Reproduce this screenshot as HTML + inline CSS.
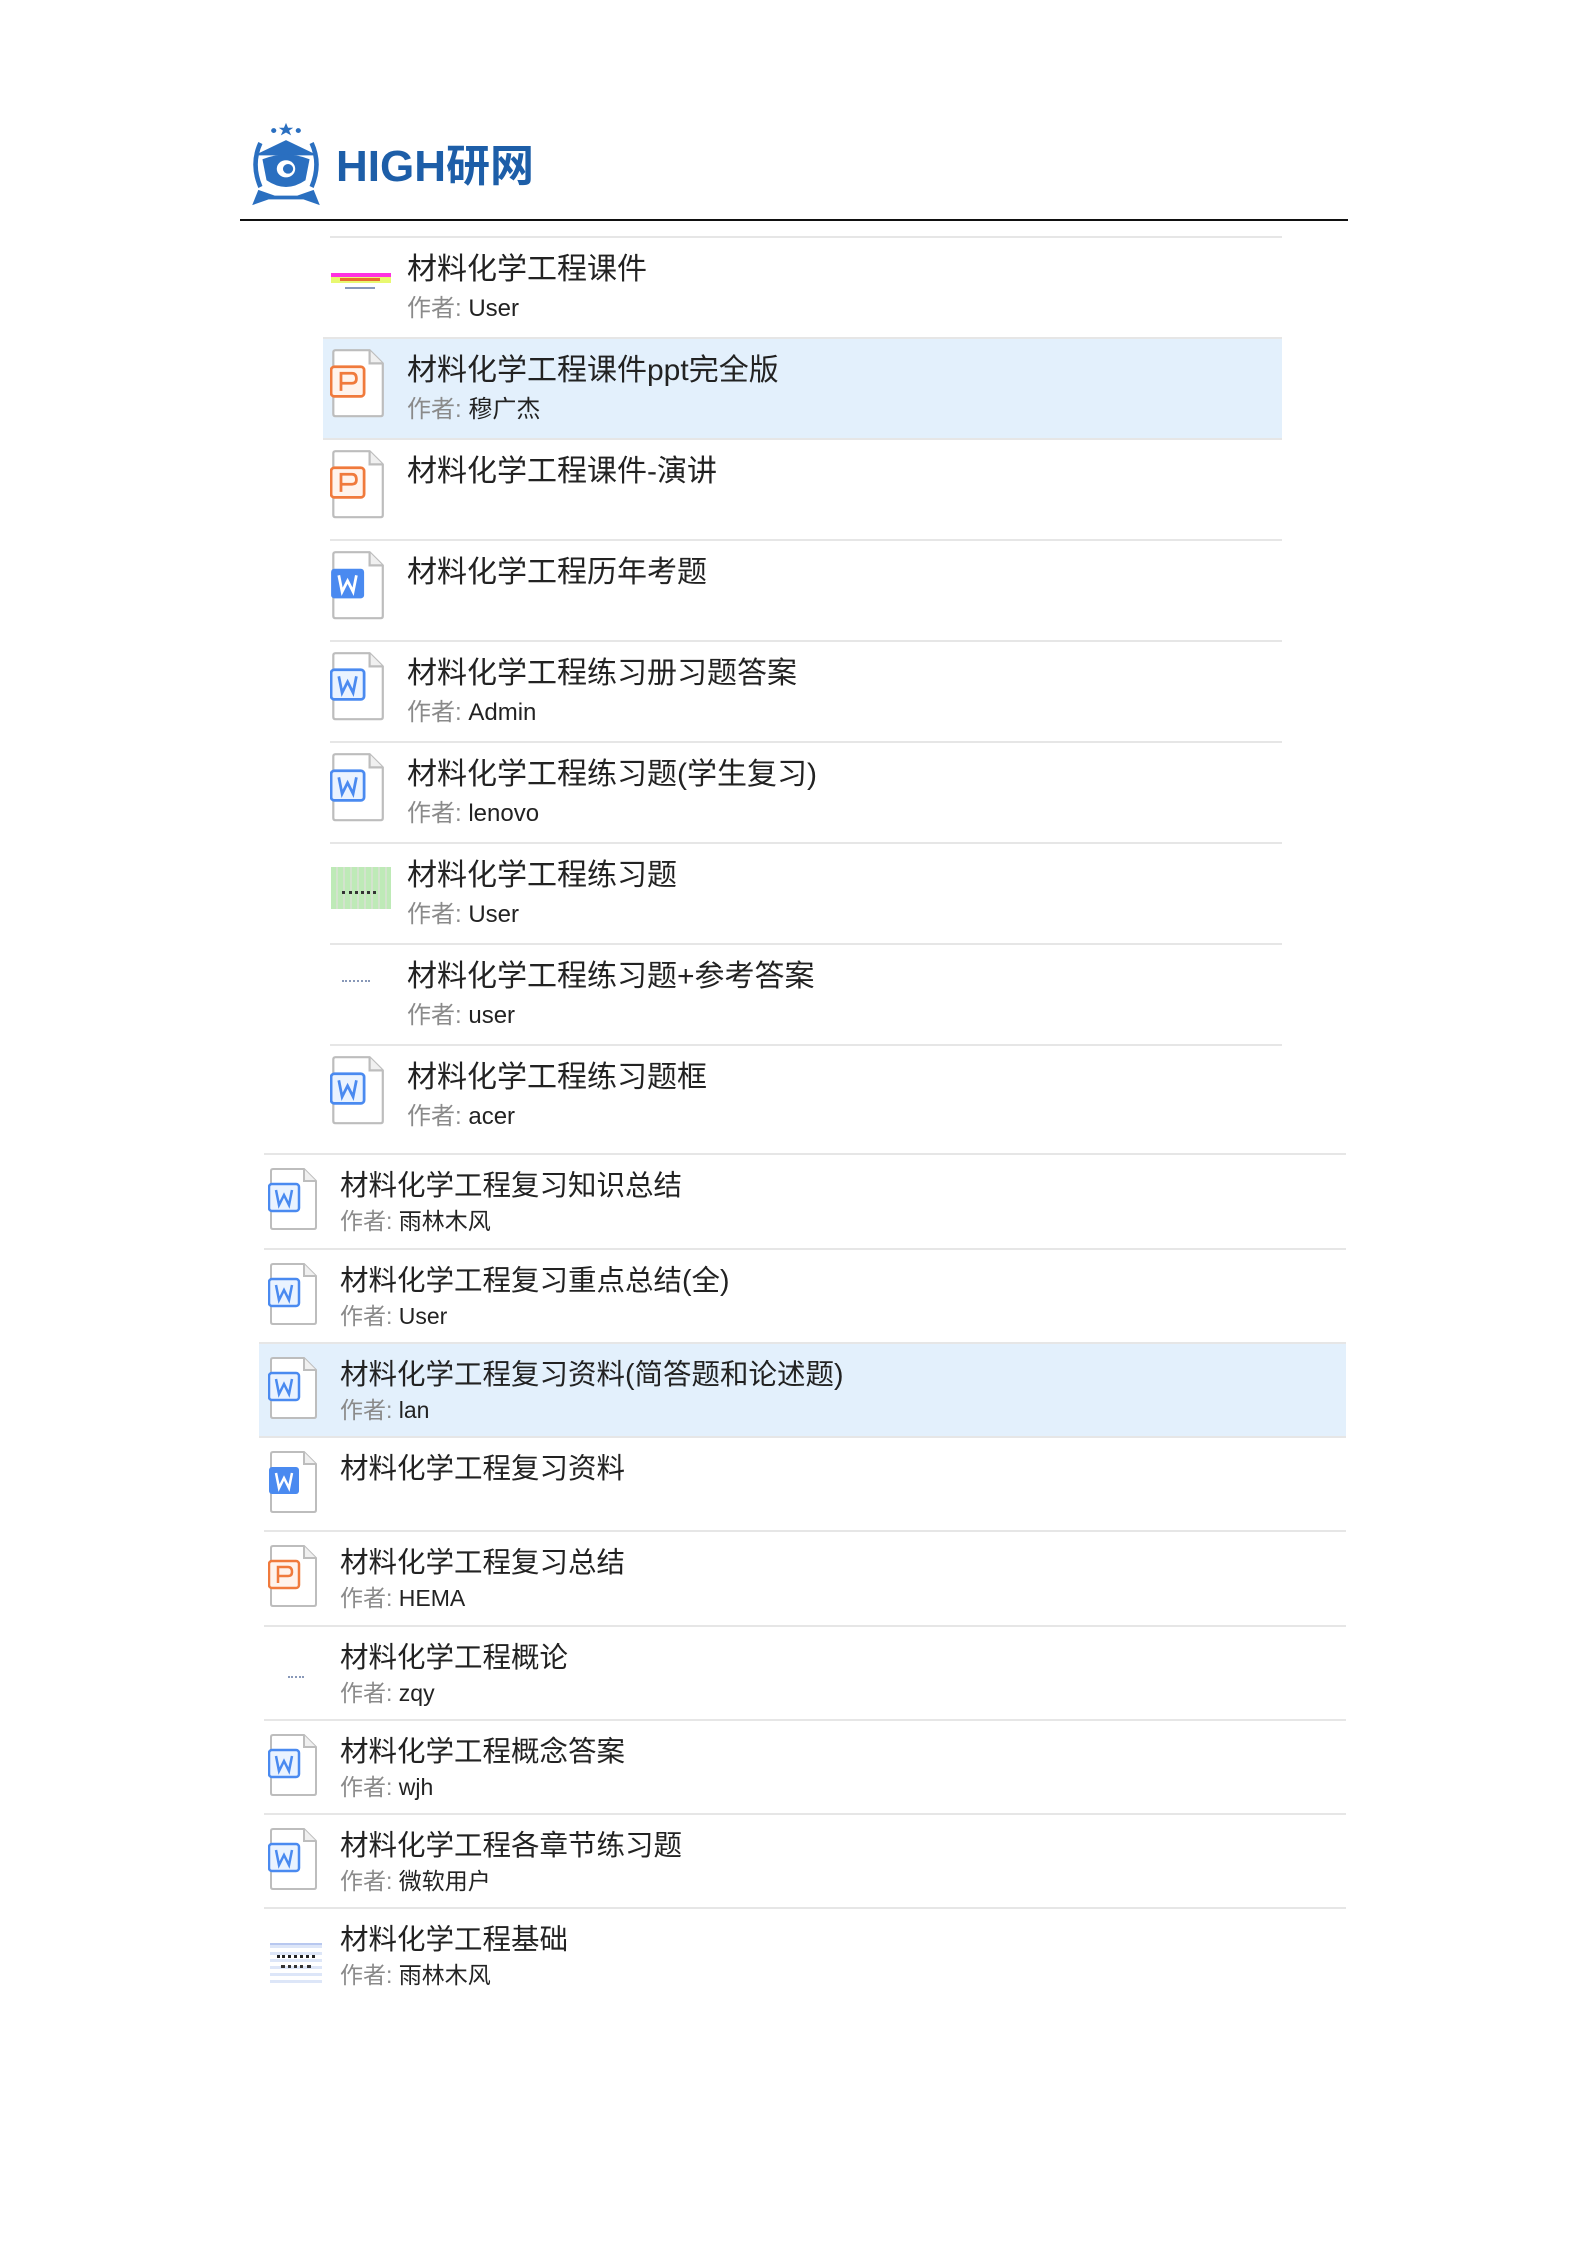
<!DOCTYPE html>
<html><head><meta charset="utf-8">
<style>
html,body{margin:0;padding:0;background:#fff;}
body{width:1587px;height:2245px;position:relative;overflow:hidden;font-family:"Liberation Sans","Microsoft YaHei","Noto Sans CJK SC",sans-serif;}
.a{position:absolute;}
.line{position:absolute;height:2px;background:#e6e6e6;}
.hl{position:absolute;background:#e3f0fc;}
.t1{position:absolute;font-size:30px;color:#222;white-space:nowrap;line-height:1;}
.a1{position:absolute;font-size:24px;color:#222;white-space:nowrap;line-height:1;}
.a1 span,.a2 span{color:#8a8a8a;}
.t2{position:absolute;font-size:28.5px;color:#222;white-space:nowrap;line-height:1;}
.a2{position:absolute;font-size:23px;color:#222;white-space:nowrap;line-height:1;}
</style></head><body>

<svg class="a" style="left:244px;top:121px" width="84" height="88" viewBox="0 0 82 92" preserveAspectRatio="none">
 <g fill="#2a6fc0">
  <polygon points="41,2 43,7 48,7 44,10 46,15 41,12 36,15 38,10 34,7 39,7"/>
  <circle cx="29" cy="10" r="2.5"/><circle cx="53" cy="10" r="2.5"/>
  <path d="M14 22 Q4 45 14 70 L18 68 Q9 45 18 24Z"/>
  <path d="M68 22 Q78 45 68 70 L64 68 Q73 45 64 24Z"/>
  <polygon points="41,20 72,36 10,36"/>
  <path d="M18 40 Q41 30 64 40 L60 62 Q41 76 22 62Z"/>
  <path d="M14 72 L30 78 L52 78 L68 72 L74 88 L58 82 L24 82 L8 88Z"/>
 </g>
 <circle cx="41" cy="50" r="9" fill="#fff"/>
 <circle cx="43" cy="50" r="5" fill="#2a6fc0"/>
</svg>
<div class="a" style="left:336px;top:145px;font-size:44px;font-weight:bold;color:#1d5ea8;line-height:1;font-family:'Liberation Sans','Noto Sans CJK SC',sans-serif;">HIGH研网</div>
<div class="a" style="left:240px;top:219px;width:1108px;height:2px;background:#111"></div>

<svg width="0" height="0" style="position:absolute">
 <defs>
  <g id="doc">
   <path d="M3 1 H34 L46 13 V59 Q46 61 44 61 H3 Q1 61 1 59 V3 Q1 1 3 1Z" fill="#fff" stroke="#bdbdbd" stroke-width="2"/>
   <path d="M34 1 V13 H46" fill="#f0f0f0" stroke="#bdbdbd" stroke-width="2"/>
  </g>
  <g id="w">
   <use href="#doc"/>
   <rect x="-1" y="16" width="30" height="27" rx="3" fill="#eaf3ff" stroke="#4a8af0" stroke-width="2.5"/>
   <path d="M6 22 L9 37 L14 27 L19 37 L22 22" fill="none" stroke="#4a8af0" stroke-width="2.5"/>
  </g>
  <g id="wf">
   <use href="#doc"/>
   <rect x="-1" y="16" width="30" height="27" rx="3" fill="#4a8af0"/>
   <path d="M6 22 L9 37 L14 27 L19 37 L22 22" fill="none" stroke="#fff" stroke-width="2.5"/>
  </g>
  <g id="p">
   <use href="#doc"/>
   <rect x="-1" y="16" width="30" height="27" rx="3" fill="#fff3ec" stroke="#f07a3c" stroke-width="2.5"/>
   <path d="M8 38 V22 H18 Q22 22 22 27 Q22 31 18 31 H8" fill="none" stroke="#f07a3c" stroke-width="2.5"/>
  </g>
 </defs>
</svg>

<div class="hl" style="left:323px;top:338px;width:959px;height:101px"></div>
<div class="line" style="left:330px;top:236px;width:952px"></div>
<div class="line" style="left:323px;top:337px;width:959px"></div>
<div class="line" style="left:323px;top:438px;width:959px"></div>
<div class="line" style="left:330px;top:539px;width:952px"></div>
<div class="line" style="left:330px;top:640px;width:952px"></div>
<div class="line" style="left:330px;top:741px;width:952px"></div>
<div class="line" style="left:330px;top:842px;width:952px"></div>
<div class="line" style="left:330px;top:943px;width:952px"></div>
<div class="line" style="left:330px;top:1044px;width:952px"></div>

<div class="a" style="left:331px;top:273px;width:60px;height:4px;background:#ff30e0"></div>
<div class="a" style="left:331px;top:277px;width:60px;height:6px;background:#e8f870"></div>
<div class="a" style="left:340px;top:278px;width:40px;height:3px;background:#e86a30"></div>
<div class="a" style="left:345px;top:287px;width:30px;height:2px;background:#8899bb"></div>
<svg class="a" style="left:330px;top:348px" width="56" height="70"><g transform="scale(1.1)"><use href="#p" x="2" y="1"/></g></svg>
<svg class="a" style="left:330px;top:449px" width="56" height="70"><g transform="scale(1.1)"><use href="#p" x="2" y="1"/></g></svg>
<svg class="a" style="left:330px;top:550px" width="56" height="70"><g transform="scale(1.1)"><use href="#wf" x="2" y="1"/></g></svg>
<svg class="a" style="left:330px;top:651px" width="56" height="70"><g transform="scale(1.1)"><use href="#w" x="2" y="1"/></g></svg>
<svg class="a" style="left:330px;top:752px" width="56" height="70"><g transform="scale(1.1)"><use href="#w" x="2" y="1"/></g></svg>
<div class="a" style="left:331px;top:867px;width:60px;height:42px;background:repeating-linear-gradient(90deg,#b8e8b0 0 5px,#cfe0c8 5px 7px),#bfe8b8;opacity:.9"></div>
<div class="a" style="left:342px;top:891px;width:34px;height:3px;border-top:3px dotted #333"></div>
<div class="a" style="left:342px;top:980px;width:28px;height:2px;border-top:2px dotted #8898b8"></div>
<svg class="a" style="left:330px;top:1055px" width="56" height="70"><g transform="scale(1.1)"><use href="#w" x="2" y="1"/></g></svg>

<div class="t1" style="left:407px;top:255px">材料化学工程课件</div>
<div class="a1" style="left:407px;top:297px"><span>作者:</span> User</div>
<div class="t1" style="left:407px;top:356px">材料化学工程课件ppt完全版</div>
<div class="a1" style="left:407px;top:398px"><span>作者:</span> 穆广杰</div>
<div class="t1" style="left:407px;top:457px">材料化学工程课件-演讲</div>
<div class="t1" style="left:407px;top:558px">材料化学工程历年考题</div>
<div class="t1" style="left:407px;top:659px">材料化学工程练习册习题答案</div>
<div class="a1" style="left:407px;top:701px"><span>作者:</span> Admin</div>
<div class="t1" style="left:407px;top:760px">材料化学工程练习题(学生复习)</div>
<div class="a1" style="left:407px;top:802px"><span>作者:</span> lenovo</div>
<div class="t1" style="left:407px;top:861px">材料化学工程练习题</div>
<div class="a1" style="left:407px;top:903px"><span>作者:</span> User</div>
<div class="t1" style="left:407px;top:962px">材料化学工程练习题+参考答案</div>
<div class="a1" style="left:407px;top:1004px"><span>作者:</span> user</div>
<div class="t1" style="left:407px;top:1063px">材料化学工程练习题框</div>
<div class="a1" style="left:407px;top:1105px"><span>作者:</span> acer</div>

<div class="hl" style="left:259px;top:1343px;width:1087px;height:94px"></div>
<div class="line" style="left:264px;top:1153px;width:1082px"></div>
<div class="line" style="left:264px;top:1248px;width:1082px"></div>
<div class="line" style="left:259px;top:1342px;width:1087px"></div>
<div class="line" style="left:259px;top:1436px;width:1087px"></div>
<div class="line" style="left:264px;top:1530px;width:1082px"></div>
<div class="line" style="left:264px;top:1625px;width:1082px"></div>
<div class="line" style="left:264px;top:1719px;width:1082px"></div>
<div class="line" style="left:264px;top:1813px;width:1082px"></div>
<div class="line" style="left:264px;top:1907px;width:1082px"></div>

<svg class="a" style="left:268px;top:1167px" width="52" height="64"><use href="#w" x="2" y="1"/></svg>
<svg class="a" style="left:268px;top:1262px" width="52" height="64"><use href="#w" x="2" y="1"/></svg>
<svg class="a" style="left:268px;top:1356px" width="52" height="64"><use href="#w" x="2" y="1"/></svg>
<svg class="a" style="left:268px;top:1450px" width="52" height="64"><use href="#wf" x="2" y="1"/></svg>
<svg class="a" style="left:268px;top:1544px" width="52" height="64"><use href="#p" x="2" y="1"/></svg>
<div class="a" style="left:288px;top:1676px;width:16px;height:2px;border-top:2px dotted #8898b8"></div>
<svg class="a" style="left:268px;top:1733px" width="52" height="64"><use href="#w" x="2" y="1"/></svg>
<svg class="a" style="left:268px;top:1827px" width="52" height="64"><use href="#w" x="2" y="1"/></svg>
<div class="a" style="left:270px;top:1943px;width:52px;height:38px;background:repeating-linear-gradient(0deg,#dde6f8 0 3px,#fff 3px 7px);border-top:2px solid #b8c8f0"></div>
<div class="a" style="left:277px;top:1955px;width:38px;height:2px;border-top:3px dotted #222"></div>
<div class="a" style="left:281px;top:1965px;width:30px;height:2px;border-top:3px dotted #333"></div>

<div class="t2" style="left:340px;top:1172px">材料化学工程复习知识总结</div>
<div class="a2" style="left:340px;top:1210px"><span>作者:</span> 雨林木风</div>
<div class="t2" style="left:340px;top:1267px">材料化学工程复习重点总结(全)</div>
<div class="a2" style="left:340px;top:1305px"><span>作者:</span> User</div>
<div class="t2" style="left:340px;top:1361px">材料化学工程复习资料(简答题和论述题)</div>
<div class="a2" style="left:340px;top:1399px"><span>作者:</span> lan</div>
<div class="t2" style="left:340px;top:1455px">材料化学工程复习资料</div>
<div class="t2" style="left:340px;top:1549px">材料化学工程复习总结</div>
<div class="a2" style="left:340px;top:1587px"><span>作者:</span> HEMA</div>
<div class="t2" style="left:340px;top:1644px">材料化学工程概论</div>
<div class="a2" style="left:340px;top:1682px"><span>作者:</span> zqy</div>
<div class="t2" style="left:340px;top:1738px">材料化学工程概念答案</div>
<div class="a2" style="left:340px;top:1776px"><span>作者:</span> wjh</div>
<div class="t2" style="left:340px;top:1832px">材料化学工程各章节练习题</div>
<div class="a2" style="left:340px;top:1870px"><span>作者:</span> 微软用户</div>
<div class="t2" style="left:340px;top:1926px">材料化学工程基础</div>
<div class="a2" style="left:340px;top:1964px"><span>作者:</span> 雨林木风</div>

</body></html>
